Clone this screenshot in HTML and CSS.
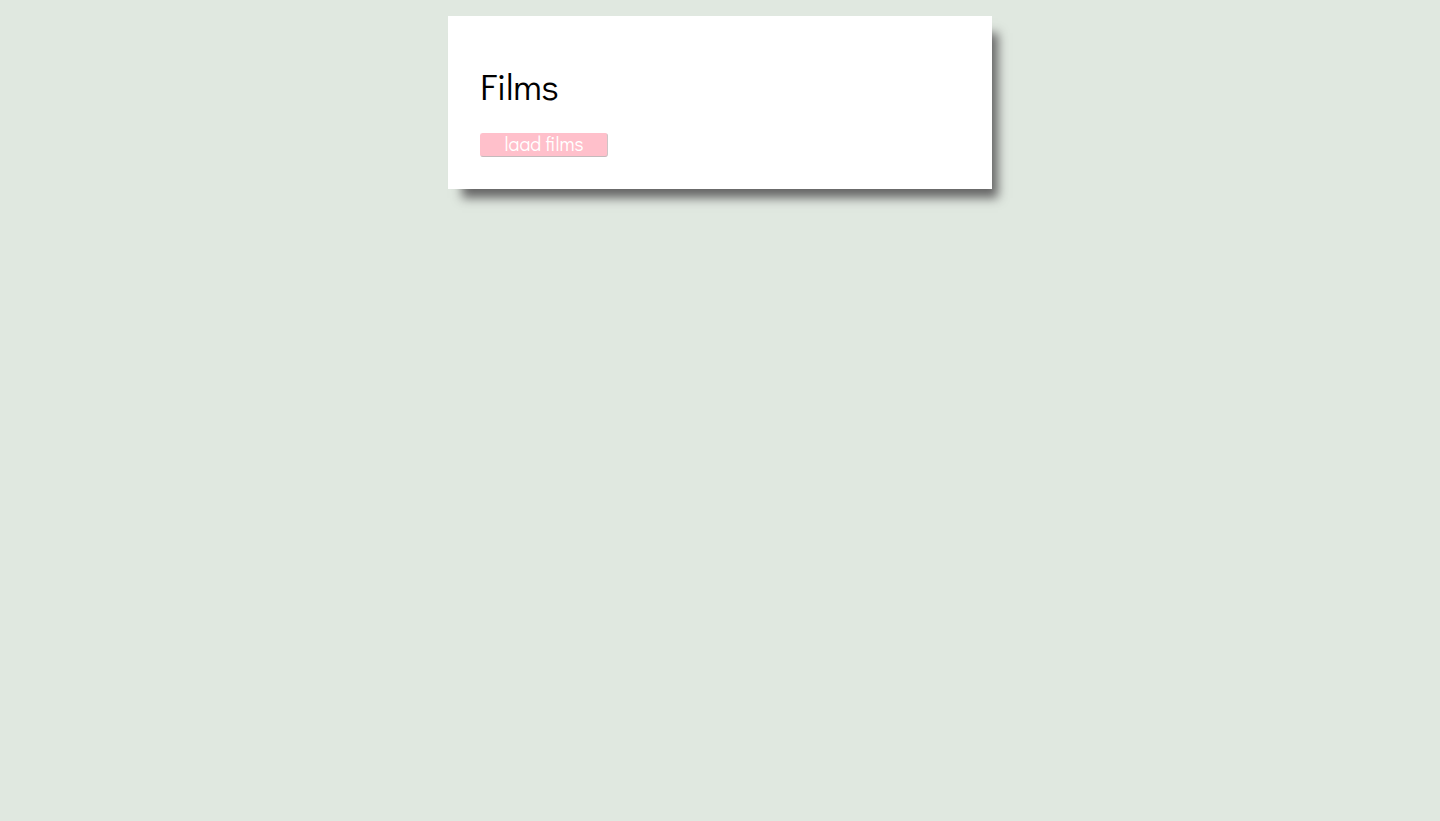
FILE: index.html
```html
<!DOCTYPE html>
<html>
<head>
<meta charset="utf-8">
<link rel="stylesheet" href="styles.css">
</head>
<body>
<main class="card">
  <h1 class="title">Films</h1>
  <button class="load-btn">laad films</button>
</main>
</body>
</html>
```
FILE: styles.css
```css
html, body {
  margin: 0;
  padding: 0;
}
html {
  min-height: 100%;
  background: #e0e8e0;
}
body {
  min-height: 805px;
  font-family: "Didact Gothic", "Lato", "Noto Sans", sans-serif;
  padding-top: 16px;
}
.card {
  width: 544px;
  box-sizing: border-box;
  margin: 0 auto;
  background: #fff;
  padding: 32px 32px 32px 32px;
  box-shadow: 10px 13px 10px -4px #666;
}
.title {
  margin: 16px 0 25px;
  font-weight: 400;
  font-size: 37px;
  line-height: 44px;
  letter-spacing: -0.3px;
  color: #000;
}
.load-btn {
  display: block;
  width: 128px;
  height: 24px;
  padding: 0 0 3px;
  background: #ffc0cb;
  color: #fff;
  border: 1px solid #ffc0cb;
  border-bottom-color: #c4babc;
  border-right-color: #cfc4c6;
  border-radius: 3px;
  font-family: "Didact Gothic", "Lato", sans-serif;
  font-weight: 400;
  font-size: 19.5px;
  line-height: 20px;
}
```
